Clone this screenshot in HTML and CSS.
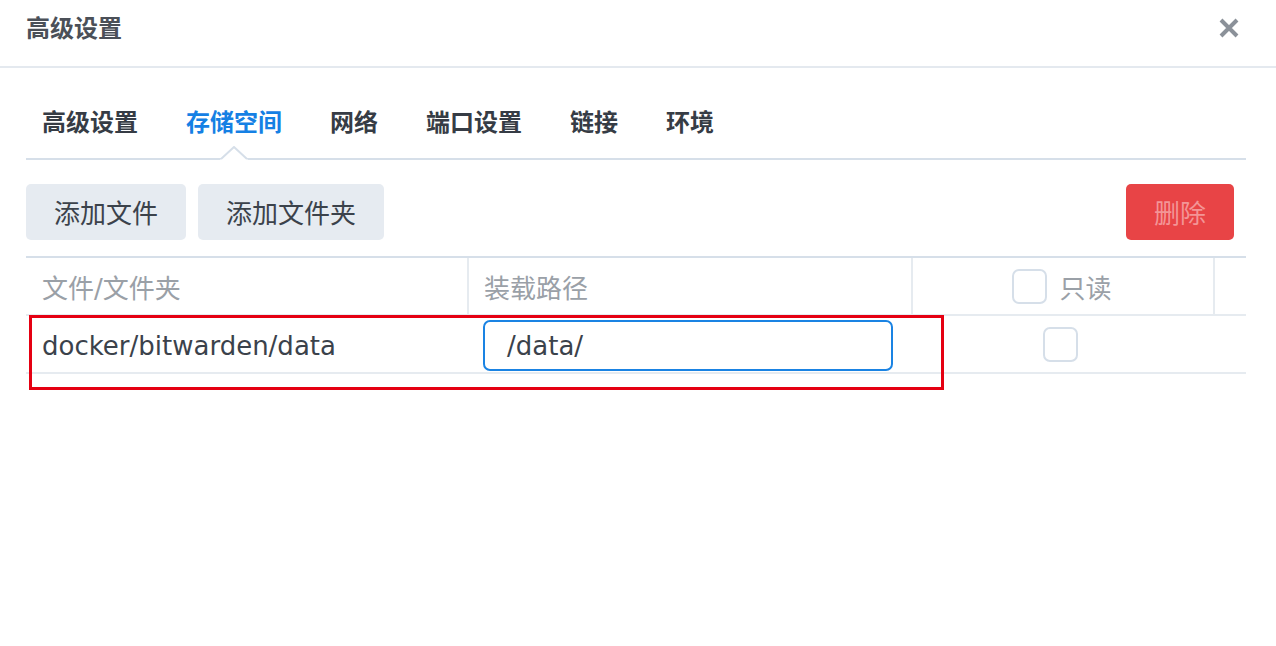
FILE: index.html
```html
<!DOCTYPE html>
<html lang="zh-CN">
<head>
<meta charset="utf-8">
<title>高级设置</title>
<link rel="stylesheet" href="styles.css">
</head>
<body>
<div class="dialog">
  <div class="header">
    <div class="title">高级设置</div>
    <svg class="close" width="22" height="22" viewBox="0 0 22 22"><path d="M3 3 L19 19 M19 3 L3 19" stroke="#8b9199" stroke-width="4" stroke-linecap="butt"/></svg>
  </div>
  <div class="content">
    <div class="tabs">
      <div class="tab">高级设置</div>
      <div class="tab active">存储空间<svg class="caret" width="28" height="14" viewBox="0 0 28 14"><polygon points="0,14 14,1 28,14" fill="#fff"/><polyline points="1,13 14,1 27,13" fill="none" stroke="#d6dfe9" stroke-width="2"/></svg></div>
      <div class="tab">网络</div>
      <div class="tab">端口设置</div>
      <div class="tab">链接</div>
      <div class="tab">环境</div>
    </div>
    <div class="toolbar">
      <button class="btn">添加文件</button>
      <button class="btn">添加文件夹</button>
      <button class="btn danger">删除</button>
    </div>
    <div class="table">
      <div class="row head">
        <div class="cell">文件/文件夹</div>
        <div class="cell sep">装载路径</div>
        <div class="cell sep center"><span class="check"></span><span>只读</span></div>
        <div class="cell sep"></div>
      </div>
      <div class="row body">
        <div class="cell text">docker/bitwarden/data</div>
        <div class="cell"><div class="input">/data/</div></div>
        <div class="cell center"><span class="check"></span></div>
        <div class="cell"></div>
        <div class="mark"></div>
      </div>
    </div>
  </div>
</div>
</body>
</html>
```

FILE: styles.css
```css
* { box-sizing: border-box; }
html, body { margin: 0; padding: 0; background: #fff; }
body {
  font-family: "DejaVu Sans", "Noto Sans CJK SC", sans-serif;
  color: #3b424b;
  width: 1276px;
  height: 646px;
  overflow: hidden;
}
.header {
  height: 68px;
  padding: 0 36px 0 26px;
  display: flex;
  align-items: center;
  justify-content: space-between;
  border-bottom: 2px solid #e4e9ef;
}
.title {
  font-family: "Noto Sans CJK SC", sans-serif;
  font-size: 24px;
  font-weight: 600;
  color: #4b5058;
  line-height: 32px;
  margin-top: -12px;
}
.close { margin-top: -11px; }
.content { padding: 0 30px 0 26px; }
.tabs {
  display: flex;
  gap: 48px;
  padding: 37px 0 21px 16px;
  border-bottom: 2px solid #d6dfe9;
}
.tab {
  position: relative;
  font-family: "Noto Sans CJK SC", sans-serif;
  font-size: 24px;
  font-weight: 700;
  line-height: 32px;
  color: #363c45;
}
.tab.active { color: #1580e4; }
.caret {
  position: absolute;
  left: 50%;
  margin-left: -14px;
  bottom: -23px;
}
.toolbar {
  display: flex;
  gap: 12px;
  margin-top: 24px;
  padding-right: 12px;
}
.btn {
  height: 56px;
  padding: 0 28px;
  border: none;
  border-radius: 5px;
  background: #e6ebf1;
  color: #3b424b;
  font-family: "Noto Sans CJK SC", sans-serif;
  font-size: 26px;
  line-height: 56px;
}
.btn.danger {
  margin-left: auto;
  background: #e84446;
  color: #f39596;
}
.table {
  margin-top: 16px;
  border-top: 2px solid #d6dfe9;
}
.row {
  position: relative;
  display: grid;
  grid-template-columns: 441px 444px 302px 1fr;
  height: 58px;
  border-bottom: 2px solid #e6ebf0;
}
.cell {
  display: flex;
  align-items: center;
  padding-left: 16px;
  font-size: 26px;
}
.head .cell { color: #9aa0a7; }
.cell.sep { border-left: 2px solid #e6ebf0; padding-left: 15px; }
.cell.center { justify-content: center; padding-left: 0; gap: 12px; }
.head .cell.center { padding-right: 2px; }
.body .cell.center { padding-right: 4px; }
.check {
  display: inline-block;
  width: 35px;
  height: 35px;
  border: 2px solid #d6dfe9;
  border-radius: 7px;
  background: #fff;
}
.text { color: #3b424b; padding-top: 3px; }
.input {
  width: 410px;
  height: 51px;
  margin-top: 3px;
  border: 2px solid #1a83e3;
  border-radius: 7px;
  padding-left: 22px;
  display: flex;
  align-items: center;
  font-size: 26px;
  color: #3b424b;
}
.mark {
  position: absolute;
  left: 3px;
  top: -1px;
  width: 915px;
  height: 75px;
  border: 3px solid #e50012;
  pointer-events: none;
}
```
